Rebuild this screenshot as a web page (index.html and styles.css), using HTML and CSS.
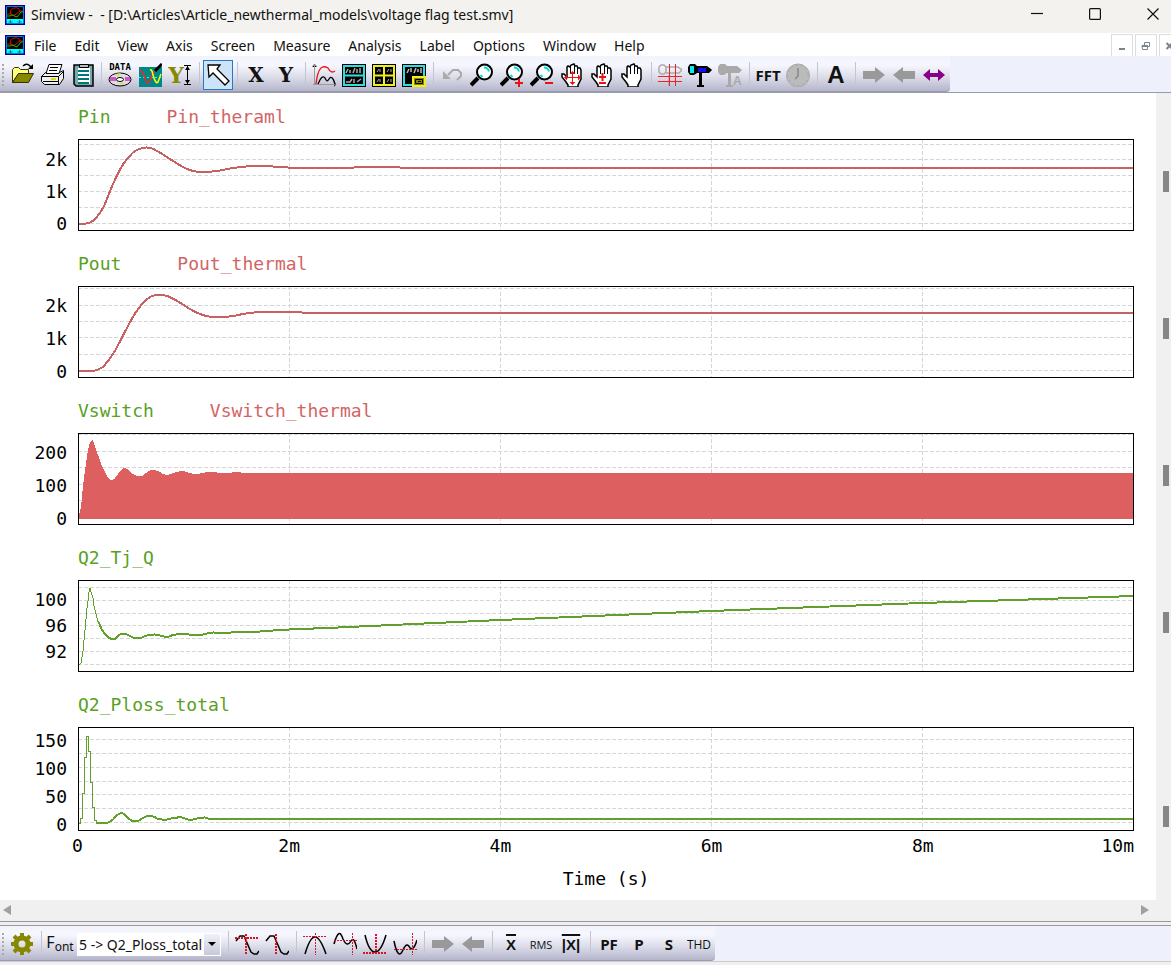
FILE: index.html
```
<!DOCTYPE html>
<html lang="en">
<head>
  <meta charset="UTF-8">
  <title>Simview</title>
  <link rel="stylesheet" href="styles.css">
</head>
<body>

<svg class="defs" aria-hidden="true">
  <symbol id="app" viewBox="0 0 20 20">
    <path fill="#0ff" stroke="#00a" stroke-width="1.5" d="M.7.7h18.6v18.6H.7z"/>
    <path d="M2 2h16v12H2z"/>
    <path fill="none" stroke="#e00" d="M2 9h4q-2-5 3-6 5-1 6 3l-5 4H7l-2-2M15 6h3"/>
    <path fill="none" stroke="#0c0" d="M2 11h3l2-1 5 2 4-5h2"/>
    <path stroke="#277" d="M5.500 15v4M3.500 17h4M14.500 15v4M12.500 17h4"/>
  </symbol>
  <symbol id="glass" viewBox="0 0 24 24">
    <path fill="none" stroke="#000" stroke-width="4" d="M1 22l7-7"/>
    <circle cx="14.500" cy="9" r="7.500" fill="#fff" stroke="#000" stroke-width="2"/>
    <path fill="none" stroke="#0dd" stroke-width="2" d="M14 4.500q4 0 5 4M10.500 12l2 2"/>
  </symbol>
  <symbol id="hand" viewBox="0 0 24 24">
    <path fill="#fff" stroke="#000" stroke-width="1.500" d="M8 22l-2-3-4-5v-3h2l3 3V4l1-1 2 1 1-2 3-1 1 2h2l1 2h2l1 2v9l-3 6v2H8z"/>
    <path stroke="#000" d="M10.500 4v7M14.500 3v8M17.500 5v6"/>
  </symbol>
  <symbol id="right" viewBox="0 0 24 24"><path fill="#999" d="M1 8h12V4l10 8-10 8v-4H1z"/></symbol>
  <symbol id="left" viewBox="0 0 24 24"><path fill="#999" d="M23 8H11V4L1 12l10 8v-4h12z"/></symbol>
</svg>

<header class="titlebar">
  <svg class="app-icon"><use href="#app"/></svg>
  <h1>Simview -&nbsp; - [D:\Articles\Article_newthermal_models\voltage flag test.smv]</h1>
  <div class="win-buttons">
    <button aria-label="Minimize"><svg viewBox="0 0 12 12"><path d="M0 5.500h12"/></svg></button>
    <button aria-label="Maximize"><svg viewBox="0 0 12 12"><rect x=".6" y=".6" width="10.800" height="10.800" rx="1"/></svg></button>
    <button aria-label="Close"><svg viewBox="0 0 12 12"><path d="M.5.5l11 11M11.500.5l-11 11"/></svg></button>
  </div>
</header>

<nav class="menubar">
  <svg class="app-icon"><use href="#app"/></svg>
  <a href="#">File</a>
  <a href="#">Edit</a>
  <a href="#">View</a>
  <a href="#">Axis</a>
  <a href="#">Screen</a>
  <a href="#">Measure</a>
  <a href="#">Analysis</a>
  <a href="#">Label</a>
  <a href="#">Options</a>
  <a href="#">Window</a>
  <a href="#">Help</a>
  <div class="mdi-buttons">
    <button aria-label="Minimize window"><svg viewBox="0 0 10 10"><path d="M2 8h6"/></svg></button>
    <button aria-label="Restore window"><svg viewBox="0 0 10 10"><path class="thin" d="M3.500 4V1.500h5v4H6M1 4.500h5.500v4h-5z M1 5.500h5"/></svg></button>
    <button aria-label="Close window"><svg viewBox="0 0 10 10"><path d="M1.500 2l6 6M7.500 2l-6 6"/></svg></button>
  </div>
</nav>

<div class="toolbar">
  <div class="strip">
    <button aria-label="Open"><svg viewBox="0 0 24 24">
      <path fill="#ffff80" stroke="#330" d="M2.500 19.500v-13l2-2h4l2 2h8v4h-10z"/>
      <path fill="#880" stroke="#330" d="M2.500 19.500l6-9h15l-5 9z"/>
      <path fill="none" stroke="#000" stroke-width="1.500" d="M13 3q4-4 8 1"/><path d="M23 1v5h-5z"/>
    </svg></button>
    <button aria-label="Print"><svg viewBox="0 0 24 24">
      <path fill="#eee" stroke="#000" d="M1.500 13.500l4-4h14l4-2v8l-4 6h-15l-3-3z"/>
      <path fill="#fff" stroke="#000" d="M6 10.500l3-9h13l-3 9z"/>
      <path stroke="#000" d="M10 4.500h8M9 7.500h8"/>
      <path fill="none" stroke="#000" d="M1.500 13.500h17l5-5M18.500 13.500v8M3 18.500h15"/>
      <path stroke="#dd0" stroke-width="2" d="M11 16h5"/>
    </svg></button>
    <button aria-label="Copy data"><svg viewBox="0 0 24 24">
      <path fill="#7aa" stroke="#000" stroke-width="1.500" d="M4 2h19v21H6l-2-2z"/>
      <path fill="#fff" d="M8 5h12v16H8z"/><path fill="#bbb" stroke="#000" d="M9.500 1.500h9v3h-9z"/>
      <path stroke="#077" stroke-width="2" d="M8 8h11M8 12h11M8 16h11M8 20h11"/>
    </svg></button>
    <span class="sep"></span>
    <button aria-label="Data"><svg viewBox="0 0 24 24">
      <text class="tiny" x="12" y="7" text-anchor="middle">DATA</text>
      <ellipse cx="12" cy="16.500" rx="11" ry="6.500" fill="#ddd" stroke="#000"/>
      <path fill="#c5c" d="M2 14h6v4H2zM17 14h5v4h-5z"/><path fill="#dd6" d="M7 11l3 3 3-4zM11 22l2-3 4 2z"/>
      <ellipse cx="12" cy="16.500" rx="3.500" ry="2" fill="#fff" stroke="#000"/>
    </svg></button>
    <button aria-label="Curve settings"><svg viewBox="0 0 24 24">
      <path fill="#088" d="M1 4h23v20H1z"/>
      <path stroke="#0ff" stroke-dasharray="2 2" d="M1 14.500h23"/>
      <path fill="none" stroke="#f22" stroke-width="1.500" d="M2 7q3 1 6 11 2 5 4-1l4-9"/>
      <path fill="none" stroke="#ff0" stroke-width="1.500" d="M12 7q2-1 3 5 3 10 5 7l3-8"/>
      <path stroke="#000" stroke-width="3" d="M17 8l7-7"/>
    </svg></button>
    <button aria-label="Y range"><svg viewBox="0 0 24 24">
      <text class="serif olive" x="8" y="20" text-anchor="middle">Y</text>
      <path stroke="#000" d="M16 2.500h7M16 21.500h7M19.500 3v18"/><path d="M17 7l2.500-4L22 7zM17 17l2.500 4 2.500-4z"/>
    </svg></button>
    <span class="sep"></span>
    <button class="active" aria-label="Select"><svg viewBox="0 0 24 24">
      <path fill="#fff" stroke="#000" stroke-width="1.300" d="M2 2h12l-3 4 12 12-4 4L7 10l-4 4z"/>
    </svg></button>
    <span class="sep"></span>
    <button class="slab">X</button>
    <button class="slab">Y</button>
    <span class="sep"></span>
    <button aria-label="Curves"><svg viewBox="0 0 24 24">
      <path stroke="#999" d="M2.500 2v20M1 21.500h22M22 19l2 2.500-2 2.500M0 4l2.500-3L5 4"/>
      <path fill="none" stroke="#e11" stroke-width="1.300" d="M4 21C6 3 11 2 16 5q3 6 7 3"/>
      <path fill="none" stroke="#000" stroke-width="1.300" d="M6 21q4-10 7-6 2 5 4 1 3-5 6 5"/>
    </svg></button>
    <button aria-label="Two screens"><svg viewBox="0 0 24 24">
      <path d="M0 1h24v23H0z"/><path fill="none" stroke="#3dd" stroke-width="2" d="M2 3h20v19H2zM2 12.500h20"/>
      <path stroke="#aaa" stroke-width="1.500" d="M4 10l2-4M8 10V7M11 10l2-5M15 10V6M18 10V5M4 19h4l2-3M12 20v-4M15 19l4-3"/>
    </svg></button>
    <button aria-label="Four screens"><svg viewBox="0 0 24 24">
      <path d="M0 1h24v23H0z"/><path fill="none" stroke="#ee2" stroke-width="2" d="M2 3h20v19H2zM12 2v21M2 12.500h20"/>
      <path stroke="#aaa" d="M5 9l2-3M8 9V6M15 9l2-3M19 9V6M5 19l2-3M8 19v-3M15 19l2-3M19 19v-3"/>
    </svg></button>
    <button aria-label="Inset screen"><svg viewBox="0 0 24 24">
      <path d="M0 1h24v23H0z"/><path fill="none" stroke="#3dd" stroke-width="2" d="M2 3h20v19H2z"/>
      <path stroke="#bbb" stroke-width="1.500" d="M5 10l2-4M9 9V5M12 10l2-5M16 9V6M19 10V5"/>
      <path fill="#880" stroke="#ee2" stroke-width="2" d="M11 14h12v9H11z"/><path fill="none" stroke="#000" d="M13.500 16.500h7v4h-7zM16 18.500h3"/>
    </svg></button>
    <span class="sep"></span>
    <button aria-label="Undo"><svg viewBox="0 0 24 24">
      <path fill="#aaa" d="M3 8l8 8H3z"/><path fill="none" stroke="#aaa" stroke-width="2" d="M8 12l5-5h5l3 3v3l-4 4"/>
    </svg></button>
    <button aria-label="Zoom"><svg><use href="#glass"/></svg></button>
    <button aria-label="Zoom in"><svg viewBox="0 0 24 24"><use href="#glass"/><path stroke="#e11" stroke-width="2" d="M15 20h8M19 16v8"/></svg></button>
    <button aria-label="Zoom out"><svg viewBox="0 0 24 24"><use href="#glass"/><path stroke="#e11" stroke-width="2" d="M15 20h8"/></svg></button>
    <button aria-label="Pan"><svg viewBox="0 0 24 24"><use href="#hand"/>
      <path stroke="#e11" d="M5 14.500h15M12.500 9v12"/><path fill="#e11" d="M4 14.500l3-3v6zM21 14.500l-3-3v6zM12.500 8l3 3h-6zM12.500 22l3-3h-6z"/></svg></button>
    <button aria-label="Pan and scale"><svg viewBox="0 0 24 24"><use href="#hand"/><path stroke="#e11" stroke-width="2" d="M9 14h7M12.500 10v8M9 20h7"/></svg></button>
    <button aria-label="Grab"><svg><use href="#hand"/></svg></button>
    <span class="sep"></span>
    <button aria-label="Grid"><svg viewBox="0 0 24 24">
      <path fill="none" stroke="#aaa" stroke-width="1.500" d="M3 2h3l2 2v5l-2 2H3L1 9V4zM8 4h12l4 3-3 3H8M11 12v11"/>
      <path fill="none" stroke="#e22" d="M11.500 1v22M17.500 1v22M0 13.500h24M0 18.500h24"/>
    </svg></button>
    <button aria-label="Telescope"><svg viewBox="0 0 24 24">
      <path d="M2 1h5l2 2h10l4 3 1 1-3 3H9l-3 2H2L0 9V4z"/>
      <path fill="#0ee" d="M2 3h4v7H2z"/><path fill="#11e" d="M10 5h8v4h-8z"/>
      <path stroke="#000" stroke-width="3" d="M12.500 10v12"/><path stroke="#000" stroke-width="2" d="M9 23h7"/>
    </svg></button>
    <button aria-label="Telescope text"><svg viewBox="0 0 24 24">
      <path fill="#aaa" d="M2 1h5l2 2h10l5 4-3 3H9l-3 2H2L0 9V4z"/>
      <path stroke="#aaa" stroke-width="3" d="M11.500 10v12"/><path stroke="#aaa" stroke-width="2" d="M8 23h7"/>
      <text class="small-a" x="15" y="22">A</text>
    </svg></button>
    <span class="sep"></span>
    <button class="bold">FFT</button>
    <button aria-label="Clock"><svg viewBox="0 0 24 24">
      <circle cx="12" cy="12.500" r="11.500" fill="#bbb" stroke="#aaa"/><circle cx="12" cy="12.500" r="10" fill="none" stroke="#999" stroke-dasharray="1 4"/>
      <path fill="none" stroke="#888" stroke-width="1.500" d="M12 5v8l-3 3"/>
    </svg></button>
    <span class="sep"></span>
    <button class="big">A</button>
    <span class="sep"></span>
    <button aria-label="Next"><svg><use href="#right"/></svg></button>
    <button aria-label="Previous"><svg><use href="#left"/></svg></button>
    <button aria-label="Fit width"><svg viewBox="0 0 24 24"><path fill="#808" d="M1 12l7-6v4h8V6l7 6-7 6v-4H8v4z"/></svg></button>
  </div>
</div>

<div class="workspace">
  <main class="charts">
    <section class="chart">
      <h2><span class="green">Pin</span><span class="red">Pin_theraml</span></h2>
      <div class="row">
        <ul class="ticks rows-32"><li>2k</li><li>1k</li><li>0</li></ul>
        <svg class="plot" id="pin" viewBox="1 1 1054 90" preserveAspectRatio="none"></svg>
      </div>
    </section>
    <section class="chart">
      <h2><span class="green">Pout</span><span class="red">Pout_thermal</span></h2>
      <div class="row">
        <ul class="ticks rows-33"><li>2k</li><li>1k</li><li>0</li></ul>
        <svg class="plot" id="pout" viewBox="1 1 1054 90" preserveAspectRatio="none"></svg>
      </div>
    </section>
    <section class="chart">
      <h2><span class="green">Vswitch</span><span class="red">Vswitch_thermal</span></h2>
      <div class="row">
        <ul class="ticks rows-33"><li>200</li><li>100</li><li>0</li></ul>
        <svg class="plot" id="vswitch" viewBox="1 1 1054 90" preserveAspectRatio="none"></svg>
      </div>
    </section>
    <section class="chart">
      <h2><span class="green">Q2_Tj_Q</span></h2>
      <div class="row">
        <ul class="ticks rows-26"><li>100</li><li>96</li><li>92</li></ul>
        <svg class="plot" id="tj" viewBox="1 1 1054 90" preserveAspectRatio="none"></svg>
      </div>
    </section>
    <section class="chart last">
      <h2><span class="green">Q2_Ploss_total</span></h2>
      <div class="row">
        <ul class="ticks rows-28"><li>150</li><li>100</li><li>50</li><li>0</li></ul>
        <svg class="plot tall" id="ploss" viewBox="1 1 1054 102" preserveAspectRatio="none"></svg>
      </div>
    </section>
    <ul class="x-axis"><li>0</li><li>2m</li><li>4m</li><li>6m</li><li>8m</li><li>10m</li></ul>
    <p class="x-title">Time (s)</p>
  </main>
  <aside class="handles"><i></i><i></i><i></i><i></i><i></i></aside>
</div>

<div class="hscroll">
  <button aria-label="Scroll left"><svg viewBox="0 0 8 10"><path d="M8 0v10L0 5z"/></svg></button>
  <button aria-label="Scroll right"><svg viewBox="0 0 8 10"><path d="M0 0v10l8-5z"/></svg></button>
</div>

<div class="toolbar bottom">
  <div class="strip">
    <button aria-label="Settings"><svg viewBox="0 0 24 24">
      <circle cx="12" cy="12" r="6" fill="none" stroke="#880" stroke-width="5"/>
      <path stroke="#880" stroke-width="4" d="M12 1v4M12 19v4M1 12h4M19 12h4M4 4l3 3M17 17l3 3M20 4l-3 3M7 17l-3 3"/>
    </svg></button>
    <span class="sep"></span>
    <button class="font"><span>F</span>ont</button>
    <div class="combo">
      <select aria-label="Curve"><option>5 -&gt; Q2_Ploss_total</option></select>
      <span class="arrow"></span>
    </div>
    <span class="sep"></span>
    <button aria-label="Next level"><svg viewBox="0 0 24 24">
      <path class="wave" d="M1 9l4-5h4l7 16 3 2h3l2-3"/><path class="dots" d="M0 6h24M11 2v20"/>
    </svg></button>
    <button aria-label="Next time"><svg viewBox="0 0 24 24">
      <path class="wave" d="M1 9l4-5h4l7 16 3 2h3l2-3"/><path class="dots" d="M11 2v20"/>
    </svg></button>
    <span class="sep"></span>
    <button aria-label="Global maximum"><svg viewBox="0 0 24 24">
      <path class="wave" d="M2 22Q7 5 12 5t11 17"/><path class="dots fine" d="M0 4.500h24M12.500 1v22"/>
    </svg></button>
    <button aria-label="Local maximum"><svg viewBox="0 0 24 24">
      <path class="wave" d="M1 12q5-18 9-5 4 9 8 2 3-5 6 8"/><path class="dots fine" d="M1 8.500h23M19.500 1v22"/>
    </svg></button>
    <button aria-label="Global minimum"><svg viewBox="0 0 24 24">
      <path class="wave" d="M2 3q4 17 10 17T23 3"/><path class="dots" d="M0 21h24M13 2v20"/>
    </svg></button>
    <button aria-label="Local minimum"><svg viewBox="0 0 24 24">
      <path class="wave" d="M1 9q4 20 9 9 4-9 7-2 4 3 7-8"/><path class="dots fine" d="M1 17.500h23M19.500 1v22"/>
    </svg></button>
    <span class="sep"></span>
    <button aria-label="Next point"><svg><use href="#right"/></svg></button>
    <button aria-label="Previous point"><svg><use href="#left"/></svg></button>
    <span class="sep"></span>
    <button class="over">X</button>
    <button class="light rms">RMS</button>
    <button class="over">|X|</button>
    <span class="sep"></span>
    <button class="bold">PF</button>
    <button class="bold">P</button>
    <button class="bold">S</button>
    <button class="light">THD</button>
  </div>
</div>

<script src="charts.js"></script>
</body>
</html>
```
FILE: styles.css
```
* {
  box-sizing: border-box;
  margin: 0;
  padding: 0;
}
body {
  font-family: "Noto Sans", "Open Sans", sans-serif;
  font-size: 14px;
  color: #111;
  background: #f0f0f0;
  min-height: 100vh;
  display: flex;
  flex-direction: column;
  overflow-x: hidden;
}
ul {
  list-style: none;
}
button {
  border: 0;
  background: none;
  font: inherit;
  color: inherit;
}
.defs {
  position: absolute;
  width: 0;
  height: 0;
}
.app-icon {
  width: 20px;
  height: 20px;
  flex: none;
}

/* title bar */
.titlebar {
  height: 33px;
  background: #f3f2ee;
  display: flex;
  align-items: center;
  padding: 0 0 4px 5px;
  overflow: hidden;
}
.titlebar h1 {
  font-size: 14px;
  font-weight: normal;
  margin-left: 6px;
  white-space: nowrap;
}
.win-buttons {
  display: flex;
  margin-left: auto;
  margin-right: -11px;
}
.win-buttons button {
  width: 58px;
  height: 28px;
}
.win-buttons svg {
  width: 12px;
  height: 12px;
  fill: none;
  stroke: #111;
  stroke-width: 1.2;
}

/* menu */
.menubar {
  height: 23px;
  background: #fff;
  display: flex;
  align-items: center;
  gap: 18px;
  padding: 1px 0 0 5px;
  overflow: hidden;
}
.menubar .app-icon {
  margin-right: -9px;
}
.menubar a {
  color: #111;
  text-decoration: none;
}
.mdi-buttons {
  display: flex;
  gap: 2px;
  margin-left: auto;
  margin-right: -10px;
}
.mdi-buttons button {
  width: 22px;
  height: 23px;
  border: 1px solid #ddd;
}
.mdi-buttons svg {
  width: 10px;
  height: 10px;
  fill: none;
  stroke: #788490;
  stroke-width: 2;
}
.mdi-buttons .thin {
  stroke-width: 1;
}

/* tool bars */
.toolbar {
  background: #eef0fc;
  border-bottom: 1px solid #999ba6;
}
.strip {
  display: flex;
  align-items: center;
  width: max-content;
  height: 36px;
  padding: 2px 1px 0 2px;
  background: linear-gradient(#f2f4fb, #f6f7fe 25%, #dcdde9 60%, #b4b5cb);
  border-bottom: 1px solid #9a9bae;
  border-radius: 0 0 4px 0;
}
.strip::before {
  content: "";
  width: 2px;
  height: 22px;
  margin-right: 3px;
  background: repeating-linear-gradient(#a8a8b0 0 2px, transparent 2px 4px);
}
.strip button {
  display: flex;
  align-items: center;
  justify-content: center;
  width: 30px;
  height: 30px;
  white-space: nowrap;
}
.strip svg {
  width: 24px;
  height: 24px;
  flex: none;
}
.strip .active {
  background: #cde4f8;
  border: 1px solid #2878c8;
}
.sep {
  width: 8px;
  height: 26px;
  background: linear-gradient(#c4c5cf, #c4c5cf) center / 1px 100% no-repeat;
}
.tiny {
  font: bold 9px "DejaVu Sans Mono", monospace;
}
.serif {
  font: bold 22px "DejaVu Serif", "Liberation Serif", serif;
}
.olive {
  fill: #880;
}
.small-a {
  font: bold 12px "Liberation Sans", sans-serif;
  fill: #aaa;
}
.strip .slab {
  font: bold 20px "DejaVu Serif", "Liberation Serif", serif;
}
.strip .bold {
  font: bold 15px "Open Sans", sans-serif;
}
.strip .big {
  font: bold 24px "Liberation Sans", sans-serif;
}
.strip .light {
  font: 12px "Open Sans", sans-serif;
}
.strip .rms {
  font-size: 11px;
}
.strip .over {
  font: bold 15px "Liberation Sans", sans-serif;
  text-decoration: overline;
  text-decoration-thickness: 2px;
}
.strip .font {
  display: block;
  font-size: 12px;
  line-height: 24px;
}
.font span {
  font-size: 16px;
  vertical-align: 3px;
}
.wave {
  fill: none;
  stroke: #000;
  stroke-width: 1.5;
}
.dots {
  fill: none;
  stroke: #d12;
  stroke-width: 2;
  stroke-dasharray: 2 1;
}
.dots.fine {
  stroke-width: 1;
}
.combo {
  display: flex;
  width: 144px;
  height: 23px;
  margin: 0 3px 0 2px;
  background: #fff;
}
.combo select {
  flex: 1;
  min-width: 0;
  appearance: none;
  border: 0;
  background: none;
  font: inherit;
  color: inherit;
  padding-left: 2px;
}
.combo .arrow {
  width: 16px;
  margin: 1px;
  background: linear-gradient(#f0f1f8, #c8c9d8);
  display: flex;
  align-items: center;
  justify-content: center;
}
.combo .arrow::before {
  content: "";
  border: 4px solid transparent;
  border-top-color: #000;
  border-bottom: 0;
}
.bottom {
  border-top: 1px solid #999;
  border-bottom-color: #ccc;
  margin-bottom: 3px;
}
.bottom .strip {
  height: 35px;
}

/* charts */
.workspace {
  display: flex;
  flex: 1;
}
.charts {
  flex: 1;
  background: #fff;
  padding: 13px 22px 10px 0;
  font-family: "DejaVu Sans Mono", monospace;
  font-size: 18px;
  line-height: 22px;
  color: #000;
}
.chart {
  margin-bottom: 22px;
}
.chart.last {
  margin-bottom: 4px;
}
.chart h2 {
  display: flex;
  gap: 56px;
  margin: 0 0 11px 78px;
  font-size: 18px;
  font-weight: normal;
}
.green {
  color: #5aa01e;
}
.red {
  color: #d26464;
}
.row {
  display: flex;
}
.ticks {
  width: 67px;
  height: 92px;
  margin-right: 11px;
  text-align: right;
}
.rows-32 {
  padding-top: 5px;
  line-height: 32px;
}
.rows-33 {
  padding-top: 3px;
  line-height: 33px;
}
.rows-26 {
  padding-top: 7px;
  line-height: 26px;
}
.rows-28 {
  line-height: 28px;
}
.plot {
  flex: 1;
  min-width: 0;
  height: 92px;
  border: 1px solid #000;
  shape-rendering: crispEdges;
}
.plot.tall {
  height: 104px;
}
.grid {
  stroke: #d6d6d6;
  stroke-dasharray: 4 2;
  vector-effect: non-scaling-stroke;
}
.curve {
  fill: none;
  stroke: #62a02c;
  stroke-width: 2;
  vector-effect: non-scaling-stroke;
}
.curve.pin,
.curve.pout {
  stroke: #c86262;
}
.curve.vswitch {
  fill: #dd5f60;
  stroke: none;
}
.curve.held {
  stroke-width: 1;
}
.x-axis {
  display: grid;
  grid-template-columns: 1fr 2fr 2fr 2fr 2fr 1fr;
  margin-left: 78px;
  text-align: center;
}
.x-axis li:first-child {
  text-align: left;
  margin-left: -6px;
}
.x-axis li:last-child {
  text-align: right;
}
.x-title {
  margin: 11px 0 0 78px;
  text-align: center;
}
.handles {
  width: 15px;
  display: flex;
  flex-direction: column;
  align-items: center;
  gap: 126px;
  padding: 78px 0 0 5px;
}
.handles i {
  width: 6px;
  height: 21px;
  background: #868686;
}
.handles i:last-child {
  margin-top: 47px;
}

.hscroll {
  display: flex;
  justify-content: space-between;
  height: 22px;
  padding: 0 22px 2px 3px;
  border-bottom: 1px solid #999;
  margin-bottom: 3px;
}
.hscroll button {
  width: 8px;
}
.hscroll svg {
  width: 8px;
  height: 10px;
  fill: #a0a0a0;
}
```
FILE: charts.js
```
const END = 1056;

const charts = {
  pin: {
    grid: [5, 20, 36, 52, 68, 84],
    points: [[0,84.5],[8,84.5],[13,83],[17,80],[21,75],[26,67],[35,45],[45,25.5],[55,13.5],[61,10],[68,8.5],[74,9.5],[80,12.5],
      [92,20],[104,27.5],[115,32],[125,33],[139,32],[155,29],[175,27],[195,27.5],[219,29],[262,29],[290,28],[315,28],[330,29],[END,29]]
  },
  pout: {
    grid: [2, 19, 35, 51, 68, 84],
    points: [[0,85],[16,84.7],[24,81.5],[30,75],[37,64.7],[47,45.7],[57,27.5],[65,17],[72,11],[81,8.7],[90,10.3],[102,16.7],
      [112,23],[122,28],[132,30.7],[142,31.3],[155,30],[169,27.3],[185,26],[219,26],[229,27],[END,27]]
  },
  vswitch: {
    grid: [1, 18, 34, 51, 67, 85],
    close: 86,
    points: [[0,83],[3,73],[5,53],[8,30],[11,12],[13,8],[15,8],[19,19],[24,33],[29,43],[32,46.7],[35,47],[39,42.5],[44,36],
      [49,36],[55,41],[59,43],[64,43],[70,38.5],[75,37],[80,38],[85,41],[90,42],[95,40],[104,38],[112,40],[119,41],[129,39],
      [139,39.5],[149,40],[160,39],[167,40],[END,40]]
  },
  tj: {
    grid: [7, 20, 33, 45, 58, 71, 84],
    held: [[1,85],[3,83],[5,71],[6,60],[7,50],[9,28],[10,21],[11,12],[12,8],[13,12],[15,18],[16,26],[18,34],[20,42]],
    points: [[20,42],[24,50],[28,55],[33,59],[37,59],[41,55],[46,53.5],[50,55],[55,57.5],[62,58],[69,55.5],[77,54.5],[84,56],
      [89,57],[95,55],[105,54],[115,55],[122,55],[135,52.5],[142,53.5],[159,52],[182,51.5],[202,50],[222,49],[249,48],
      [422,40],[633,31],[844,23],[END,16]]
  },
  ploss: {
    grid: [12, 26, 40, 54, 67, 81, 95],
    steps: true,
    held: [[0,96],[2,91],[4,66],[6,30],[8,9],[10,24],[12,55],[14,80],[16,93],[18,96],[20,96]],
    points: [[18,96],[30,95.5],[35,92.5],[39,88],[44,86],[47,88],[52,92.5],[55,94],[61,93.5],[65,91],[70,89],[77,90],[80,92],
      [89,92.5],[95,91],[104,90.5],[112,93],[119,91.5],[127,90.5],[132,92],[END,92]]
  }
};

function slope(pts, i) {
  const a = pts[i - 1], b = pts[i + 1];
  if (!a || !b || b[0] === END) return 0;
  return (b[1] - a[1]) / (b[0] - a[0]);
}

function smooth(pts) {
  let d = `M${pts[0]}`;
  for (let i = 0; i < pts.length - 1; i++) {
    const [x1, y1] = pts[i], [x2, y2] = pts[i + 1];
    if (x2 - x1 > 100) {
      d += ` L${x2},${y2}`;
      continue;
    }
    const h = (x2 - x1) / 3;
    d += ` C${x1 + h},${y1 + h * slope(pts, i)} ${x2 - h},${y2 - h * slope(pts, i + 1)} ${x2},${y2}`;
  }
  return d;
}

for (const id in charts) {
  const chart = charts[id];
  let html = '';
  chart.grid.forEach(y => {
    html += `<path class="grid" d="M0 ${y}.5H${END}"/>`;
  });
  for (let x = 211; x < END - 2; x += 211) {
    html += `<path class="grid" d="M${x}.5 0V104"/>`;
  }

  let d = smooth(chart.points);
  if (chart.close) d += ` V${chart.close} H0 Z`;
  html += `<path class="curve ${id}" d="${d}"/>`;

  // the fast first part is drawn with a thin line
  if (chart.held) {
    d = `M${chart.held[0]}`;
    chart.held.slice(1).forEach(([x, y]) => {
      d += chart.steps ? ` H${x} V${y}` : ` L${x},${y}`;
    });
    html += `<path class="curve held" d="${d}"/>`;
  }
  document.getElementById(id).innerHTML = html;
}
```
